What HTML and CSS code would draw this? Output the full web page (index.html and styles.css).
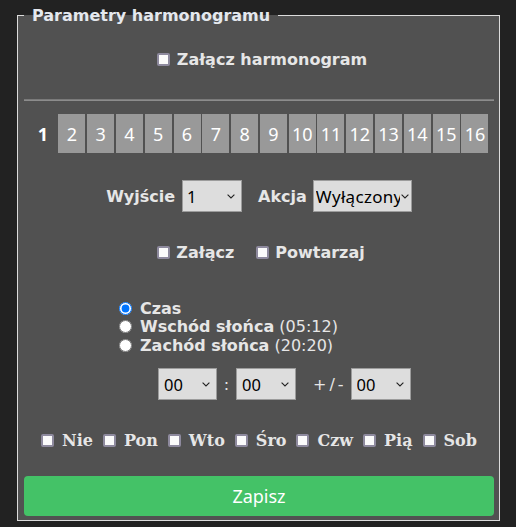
FILE: index.html
```html
<!DOCTYPE html>
<html lang="pl">
<head>
<meta charset="utf-8">
<title>Parametry harmonogramu</title>
<link rel="stylesheet" href="styles.css">
</head>
<body>
<fieldset class="panel">
  <legend class="panel-title">Parametry harmonogramu</legend>

  <div class="master">
    <label class="check"><input type="checkbox" class="cb"><span>Załącz harmonogram</span></label>
  </div>

  <hr class="sep">

  <div class="tabs">
    <span class="tab active">1</span>
    <span class="tab">2</span>
    <span class="tab">3</span>
    <span class="tab">4</span>
    <span class="tab">5</span>
    <span class="tab">6</span>
    <span class="tab">7</span>
    <span class="tab">8</span>
    <span class="tab">9</span>
    <span class="tab">10</span>
    <span class="tab">11</span>
    <span class="tab">12</span>
    <span class="tab">13</span>
    <span class="tab">14</span>
    <span class="tab">15</span>
    <span class="tab">16</span>
  </div>

  <div class="io-row">
    <span class="lbl lbl-out">Wyjście</span>
    <span class="sel sel-out">
      <select><option>1</option><option>2</option></select>
      <svg class="chev" width="8" height="5" viewBox="0 0 8 5"><path d="M0.6 0.6 L4 4 L7.4 0.6" fill="none" stroke="#222" stroke-width="1.1"/></svg>
    </span>
    <span class="lbl lbl-act">Akcja</span>
    <span class="sel sel-act">
      <select><option>Wyłączony</option><option>Załączony</option></select>
      <svg class="chev chev-tight" width="8" height="5" viewBox="0 0 8 5"><path d="M0.6 0.6 L4 4 L7.4 0.6" fill="none" stroke="#222" stroke-width="1.1"/></svg>
    </span>
  </div>

  <div class="flags">
    <label class="check"><input type="checkbox" class="cb cb-flag"><span>Załącz</span></label>
    <label class="check"><input type="checkbox" class="cb cb-flag"><span>Powtarzaj</span></label>
  </div>

  <div class="modes">
    <label class="mode"><input type="radio" name="mode" class="rb" checked><b>Czas</b></label>
    <label class="mode"><input type="radio" name="mode" class="rb"><b>Wschód słońca</b>&nbsp;(05:12)</label>
    <label class="mode"><input type="radio" name="mode" class="rb"><b>Zachód słońca</b>&nbsp;(20:20)</label>
  </div>

  <div class="time-row">
    <span class="sel sel-time">
      <select><option>00</option><option>01</option></select>
      <svg class="chev" width="8" height="5" viewBox="0 0 8 5"><path d="M0.6 0.6 L4 4 L7.4 0.6" fill="none" stroke="#222" stroke-width="1.1"/></svg>
    </span>
    <span class="colon">:</span>
    <span class="sel sel-time">
      <select><option>00</option><option>15</option></select>
      <svg class="chev" width="8" height="5" viewBox="0 0 8 5"><path d="M0.6 0.6 L4 4 L7.4 0.6" fill="none" stroke="#222" stroke-width="1.1"/></svg>
    </span>
    <span class="pm">+/-</span>
    <span class="sel sel-time">
      <select><option>00</option><option>10</option></select>
      <svg class="chev" width="8" height="5" viewBox="0 0 8 5"><path d="M0.6 0.6 L4 4 L7.4 0.6" fill="none" stroke="#222" stroke-width="1.1"/></svg>
    </span>
  </div>

  <div class="days">
    <label class="day"><input type="checkbox" class="cb cb-day"><span>Nie</span></label>
    <label class="day"><input type="checkbox" class="cb cb-day"><span>Pon</span></label>
    <label class="day"><input type="checkbox" class="cb cb-day"><span>Wto</span></label>
    <label class="day"><input type="checkbox" class="cb cb-day"><span>Śro</span></label>
    <label class="day"><input type="checkbox" class="cb cb-day"><span>Czw</span></label>
    <label class="day"><input type="checkbox" class="cb cb-day"><span>Pią</span></label>
    <label class="day"><input type="checkbox" class="cb cb-day"><span>Sob</span></label>
  </div>

  <button class="save" type="button">Zapisz</button>
</fieldset>
</body>
</html>
```

FILE: styles.css
```css
html, body {
  margin: 0;
  padding: 0;
  background: #222222;
}

body {
  font-family: "DejaVu Sans", Verdana, sans-serif;
  font-size: 16px;
  color: #e6e6e6;
}

.panel {
  box-sizing: border-box;
  width: 483px;
  margin: 6px 0 0 17px;
  padding: 0 5px 4px 6px;
  border: 1px solid #dcdcdc;
  background: #515151;
  min-width: 0;
}

.panel-title {
  padding: 0 8px;
  font-weight: bold;
  font-size: 16px;
  line-height: 19px;
  color: #e4e8ee;
}

.check {
  display: flex;
  align-items: center;
  font-weight: bold;
}

.cb {
  appearance: none;
  -webkit-appearance: none;
  box-sizing: border-box;
  width: 13px;
  height: 13px;
  margin: 0 7px 0 0;
  flex: none;
  border: 2px solid #8e8a9e;
  border-radius: 2px;
  background: #fbfbfb;
}

.master {
  margin-top: 24px;
  height: 20px;
  display: flex;
  justify-content: center;
  align-items: center;
  padding-left: 6px;
}

.sep {
  margin: 30px 0 0;
  height: 0;
  border: 0;
  border-top: 1px solid #7a7a7a;
  border-bottom: 1px solid #8c8c8c;
}

.tabs {
  margin-top: 13px;
  display: flex;
  justify-content: center;
  gap: 1.8px;
}

.tab {
  width: 27px;
  height: 39px;
  flex: none;
  display: flex;
  align-items: center;
  justify-content: center;
  background: #999999;
  color: #ffffff;
  font-family: "Noto Sans", "Open Sans", sans-serif;
  font-size: 18px;
}

.tab.active {
  background: transparent;
  font-weight: bold;
}

.io-row {
  margin-top: 27px;
  height: 32px;
  display: flex;
  justify-content: center;
  align-items: center;
}

.lbl {
  font-weight: bold;
}

.lbl-out { margin-right: 7px; }
.lbl-act { margin: 0 6px 0 16px; }

.sel {
  position: relative;
  display: block;
  box-sizing: border-box;
  height: 32px;
  flex: none;
  border: 1px solid #9c9c9c;
  background: #dddddd;
}

.sel select {
  appearance: none;
  -webkit-appearance: none;
  box-sizing: border-box;
  display: block;
  width: 100%;
  height: 30px;
  margin: 0;
  padding: 0 14px 0 4px;
  border: 0;
  border-radius: 0;
  background: transparent;
  color: #000000;
  font-family: "Noto Sans", "Open Sans", sans-serif;
  font-size: 16.5px;
  outline: none;
}

.sel-out { width: 60px; }
.sel-act { width: 99px; overflow: hidden; }
.sel-act select { width: 86px; padding: 0 0 0 2px; font-size: 17px; letter-spacing: 0.3px; }
.sel-time { width: 60px; }
.sel-time:first-child { width: 59px; }
.sel-time select { padding-left: 5px; }

.chev {
  position: absolute;
  right: 6px;
  top: 13px;
  pointer-events: none;
}

.chev-tight { right: 2px; }

.flags {
  margin-top: 30px;
  height: 20px;
  display: flex;
  justify-content: center;
  align-items: center;
  gap: 22px;
  padding-left: 4px;
}

.cb-flag { margin-right: 6px; }

.modes {
  margin: 37px 0 0 95px;
  display: flex;
  flex-direction: column;
}

.mode {
  height: 18.5px;
  display: flex;
  align-items: center;
  white-space: nowrap;
}

.rb {
  width: 13px;
  height: 13px;
  margin: 0 8px 0 0;
  flex: none;
}

.time-row {
  margin: 13.5px 0 0 134px;
  height: 32px;
  display: flex;
  align-items: center;
}

.colon {
  width: 19px;
  text-align: center;
}

.pm {
  margin: 0 4px 0 17px;
  letter-spacing: 3px;
}

.days {
  margin-top: 30px;
  height: 20px;
  display: flex;
  justify-content: center;
  align-items: center;
  gap: 10px;
}

.day {
  display: flex;
  align-items: center;
  font-family: "DejaVu Serif", "Liberation Serif", serif;
  font-weight: bold;
  font-size: 16px;
}

.cb-day { margin-right: 8px; }

.save {
  display: block;
  width: 100%;
  height: 40px;
  margin: 26px 0 0;
  padding: 0;
  border: 0;
  border-radius: 4px;
  background: #44c267;
  color: #ffffff;
  font-family: "Noto Sans", "Open Sans", sans-serif;
  font-size: 18px;
}
```
